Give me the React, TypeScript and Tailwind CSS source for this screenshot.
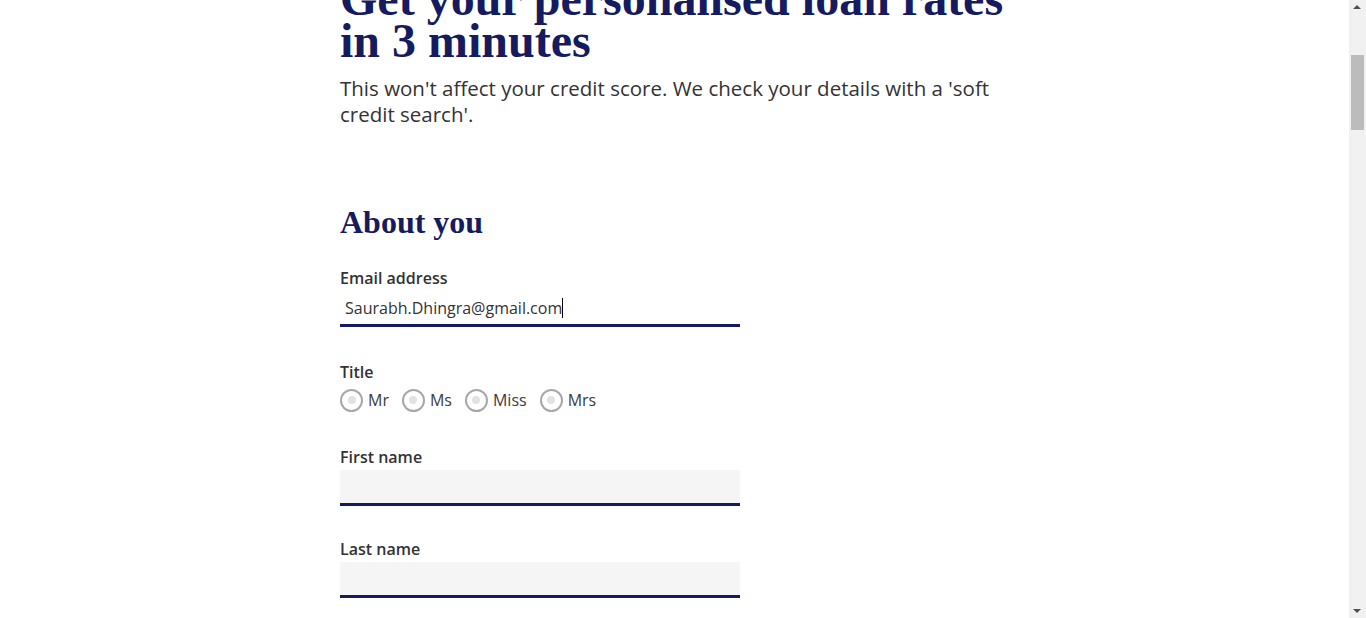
import React from "react";

const navy = "text-[#151b5e]";

function Field({ label, className = "" }: { label: string; className?: string }) {
  return (
    <div className={className}>
      <label className="mb-px block text-[16px] font-semibold leading-6 text-[#333]">{label}</label>
      <div className="h-[36px] w-[400px] border-b-[3px] border-[#151b5e] bg-[#f5f5f5]" />
    </div>
  );
}

const titles = ["Mr", "Ms", "Miss", "Mrs"];

export default function App() {
  return (
    <div
      className="flex h-[618px] w-full overflow-hidden bg-white"
      style={{ fontFamily: "'Open Sans', 'Liberation Sans', sans-serif" }}
    >
      <div className="flex-1 overflow-hidden">
        <div className="mx-auto -mt-[22px] w-[669px]">
          <h1
            className={`text-[48px] font-bold leading-[42px] ${navy}`}
            style={{ fontFamily: "'Liberation Serif', serif" }}
          >
            Get your personalised loan rates in 3 minutes
          </h1>
          <p className="mt-[13px] text-[20.5px] leading-[26px] text-[#333]">
            This won't affect your credit score. We check your details with a 'soft credit search'.
          </p>

          <h2
            className={`mt-[75px] text-[32px] font-bold leading-[40px] ${navy}`}
            style={{ fontFamily: "'Liberation Serif', serif" }}
          >
            About you
          </h2>

          {/* Email (focused) */}
          <div className="mt-6">
            <label className="block text-[16px] font-semibold leading-6 text-[#333]">Email address</label>
            <div className="flex h-[37px] w-[400px] items-center border-b-[3px] border-[#151b5e] bg-white pt-px pl-[5px] text-[16px] text-[#333]">
              <span>Saurabh.Dhingra@gmail.com</span>
              <span className="h-5 w-px bg-black" />
            </div>
          </div>

          {/* Title */}
          <div className="mt-[33px]">
            <label className="block text-[16px] font-semibold leading-6 text-[#333]">Title</label>
            <div className="mt-[4px] flex h-6 items-center gap-[13px]">
              {titles.map((t) => (
                <div key={t} className="flex items-center gap-[5px]">
                  <span className="flex h-[23px] w-[23px] items-center justify-center rounded-full border-2 border-[#a8a8a8]">
                    <span className="h-[8px] w-[8px] rounded-full bg-[#e2e2e2]" />
                  </span>
                  <span className="text-[16px] text-[#3c3c3c]">{t}</span>
                </div>
              ))}
            </div>
          </div>

          <Field label="First name" className="mt-[33px]" />
          <Field label="Last name" className="mt-[31px]" />
        </div>
      </div>

      {/* scrollbar */}
      <div className="relative w-[17px] bg-[#f1f1f1]">
        <div className="absolute left-[4px] top-[5px] h-0 w-0 border-x-[4px] border-b-[4px] border-x-transparent border-b-[#505050]" />
        <div className="absolute left-[2px] top-[55px] h-[75px] w-[13px] bg-[#bcbcbc]" />
        <div className="absolute bottom-[5px] left-[4px] h-0 w-0 border-x-[4px] border-t-[4px] border-x-transparent border-t-[#505050]" />
      </div>
    </div>
  );
}
